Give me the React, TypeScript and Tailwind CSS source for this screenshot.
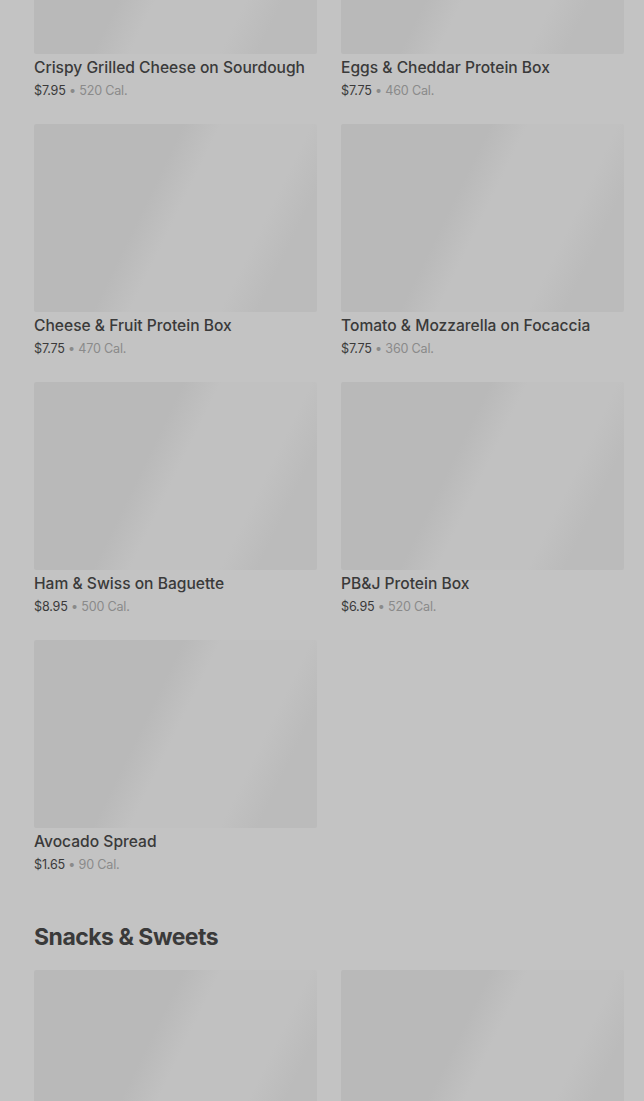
import React from "react";

type Item = { name: string; price: string; cal: string };

const sandwiches: Item[] = [
  { name: "Crispy Grilled Cheese on Sourdough", price: "$7.95", cal: "520 Cal." },
  { name: "Eggs & Cheddar Protein Box", price: "$7.75", cal: "460 Cal." },
  { name: "Cheese & Fruit Protein Box", price: "$7.75", cal: "470 Cal." },
  { name: "Tomato & Mozzarella on Focaccia", price: "$7.75", cal: "360 Cal." },
  { name: "Ham & Swiss on Baguette", price: "$8.95", cal: "500 Cal." },
  { name: "PB&J Protein Box", price: "$6.95", cal: "520 Cal." },
  { name: "Avocado Spread", price: "$1.65", cal: "90 Cal." },
];

const snacks: Item[] = [
  { name: "", price: "", cal: "" },
  { name: "", price: "", cal: "" },
];

function Placeholder() {
  return (
    <div className="h-[188px] w-full rounded-[2px] bg-[linear-gradient(116deg,#b9b9b9_0%,#b9b9b9_40%,#c1c1c1_50%,#c1c1c1_74%,#bbbbbb_84%,#bbbbbb_100%)]" />
  );
}

function MenuCard({ item }: { item: Item }) {
  return (
    <div>
      <Placeholder />
      {item.name && (
        <>
          <p className="mt-[2px] text-[15.6px] font-medium leading-6 text-[#3a3a3a]">{item.name}</p>
          <p className="mt-[1px] text-[12.6px] leading-5 tracking-[-0.2px] text-[#3a3a3a]">
            {item.price}
            <span className="text-[#8a8a8a]"> • {item.cal}</span>
          </p>
        </>
      )}
    </div>
  );
}

export default function App() {
  return (
    <div
      className="h-[1101px] overflow-hidden bg-[#c3c3c3] pl-[34px] pr-[20px]"
      style={{ fontFamily: "Inter, 'Liberation Sans', sans-serif" }}
    >
      <div className="mt-[-134px] grid grid-cols-2 gap-x-6 gap-y-[23px]">
        {sandwiches.map((item) => (
          <MenuCard key={item.name} item={item} />
        ))}
      </div>

      <h2 className="mt-[46px] text-[23px] font-bold leading-8 tracking-[-0.5px] text-[#3a3a3a]">
        Snacks &amp; Sweets
      </h2>

      <div className="mt-[17px] grid grid-cols-2 gap-x-6">
        {snacks.map((item, i) => (
          <MenuCard key={i} item={item} />
        ))}
      </div>
    </div>
  );
}
